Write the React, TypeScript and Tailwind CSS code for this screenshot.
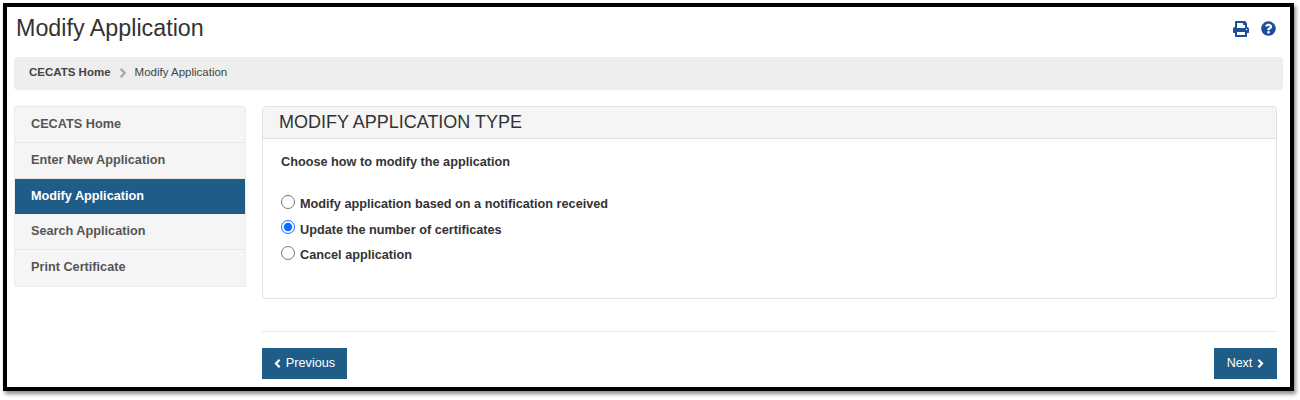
import { FaPrint, FaQuestionCircle } from "react-icons/fa";

const NAV_ITEMS = ["CECATS Home", "Enter New Application", "Modify Application", "Search Application", "Print Certificate"];
const ACTIVE_ITEM = "Modify Application";

const OPTIONS = [
  { label: "Modify application based on a notification received", checked: false },
  { label: "Update the number of certificates", checked: true },
  { label: "Cancel application", checked: false },
];

function Chevron({ left, className }: { left?: boolean; className: string }) {
  return (
    <svg viewBox="0 0 7 9" fill="none" stroke="currentColor" strokeWidth="2.2" className={className}>
      <path d={left ? "M5.6 0.8 L2 4.5 L5.6 8.2" : "M1.4 0.8 L5 4.5 L1.4 8.2"} />
    </svg>
  );
}

export default function App() {
  return (
    <div className="h-[400px] w-[1300px] bg-white pl-[3px] pt-[3px] font-['Liberation_Sans',Arial,sans-serif]">
      <div className="flex h-[388px] w-[1291px] flex-col border-4 border-black bg-white pl-[7px] pr-[7px] shadow-[2px_3px_4px_rgba(0,0,0,0.45)]">
        <header className="flex h-[50px] shrink-0 items-center justify-between pb-[7px] pl-[2px] pr-[7px]">
          <h1 className="text-[23.3px] leading-none text-[#333]">Modify Application</h1>
          <div className="flex items-center gap-[12px] text-[#1b4f9c]">
            <FaPrint className="h-[16px] w-[16px]" />
            <FaQuestionCircle className="h-[15px] w-[15px]" />
          </div>
        </header>

        <nav className="flex h-[33px] shrink-0 items-center gap-[8px] rounded-[4px] bg-[#eeeeee] pb-[1px] pl-[15px] text-[11.5px]">
          <span className="font-bold text-[#444]">CECATS Home</span>
          <Chevron className="h-[10px] w-[8px] text-[#aaa]" />
          <span className="text-[#444]">Modify Application</span>
        </nav>

        <div className="mt-[16px] flex min-h-0 flex-1 gap-[16px]">
          <aside className="w-[232px] shrink-0">
            <ul className="rounded-[2px] border border-[#ebebeb] bg-[#f5f5f5]">
              {NAV_ITEMS.map((item) => (
                <li
                  key={item}
                  className={
                    item === ACTIVE_ITEM
                      ? "flex h-[35px] items-center bg-[#1f5c87] pl-[16px] text-[12.7px] font-bold text-white"
                      : "flex h-[36px] items-center border-b border-[#e7e7e7] pl-[16px] text-[12.7px] font-bold text-[#555] last:border-b-0"
                  }
                >
                  {item}
                </li>
              ))}
            </ul>
          </aside>

          <main className="mr-[6px] flex min-w-0 flex-1 flex-col">
            <section className="h-[193px] rounded-[4px] border border-[#e2e2e2] bg-white">
              <h2 className="flex h-[32px] items-center rounded-t-[4px] border-b border-[#e2e2e2] bg-[#f5f5f5] pl-[16px] text-[18px] text-[#333]">
                MODIFY APPLICATION TYPE
              </h2>
              <div className="pl-[18px] pt-[15px]">
                <p className="text-[12.7px] font-bold leading-[16px] text-[#333]">Choose how to modify the application</p>
                <div className="mt-[22px] flex flex-col">
                  {OPTIONS.map((option) => (
                    <label key={option.label} className="flex h-[25.5px] items-center gap-[5px] text-[12.7px] font-bold text-[#333]">
                      <input type="radio" name="modifyType" defaultChecked={option.checked} className="m-0 h-[14px] w-[14px] -translate-y-[3px] accent-[#0d6efd]" />
                      {option.label}
                    </label>
                  ))}
                </div>
              </div>
            </section>

            <div className="mt-[32px] flex items-start justify-between border-t border-[#e8e8e8] pt-[16px]">
              <button type="button" className="flex h-[31px] w-[85px] items-center justify-center gap-[5px] bg-[#1f5c87] text-[12.7px] text-white">
                <Chevron left className="h-[9px] w-[7px]" />
                Previous
              </button>
              <button type="button" className="flex h-[31px] w-[63px] items-center justify-center gap-[5px] bg-[#1f5c87] text-[12.5px] text-white">
                Next
                <Chevron className="h-[9px] w-[7px]" />
              </button>
            </div>
          </main>
        </div>
      </div>
    </div>
  );
}
